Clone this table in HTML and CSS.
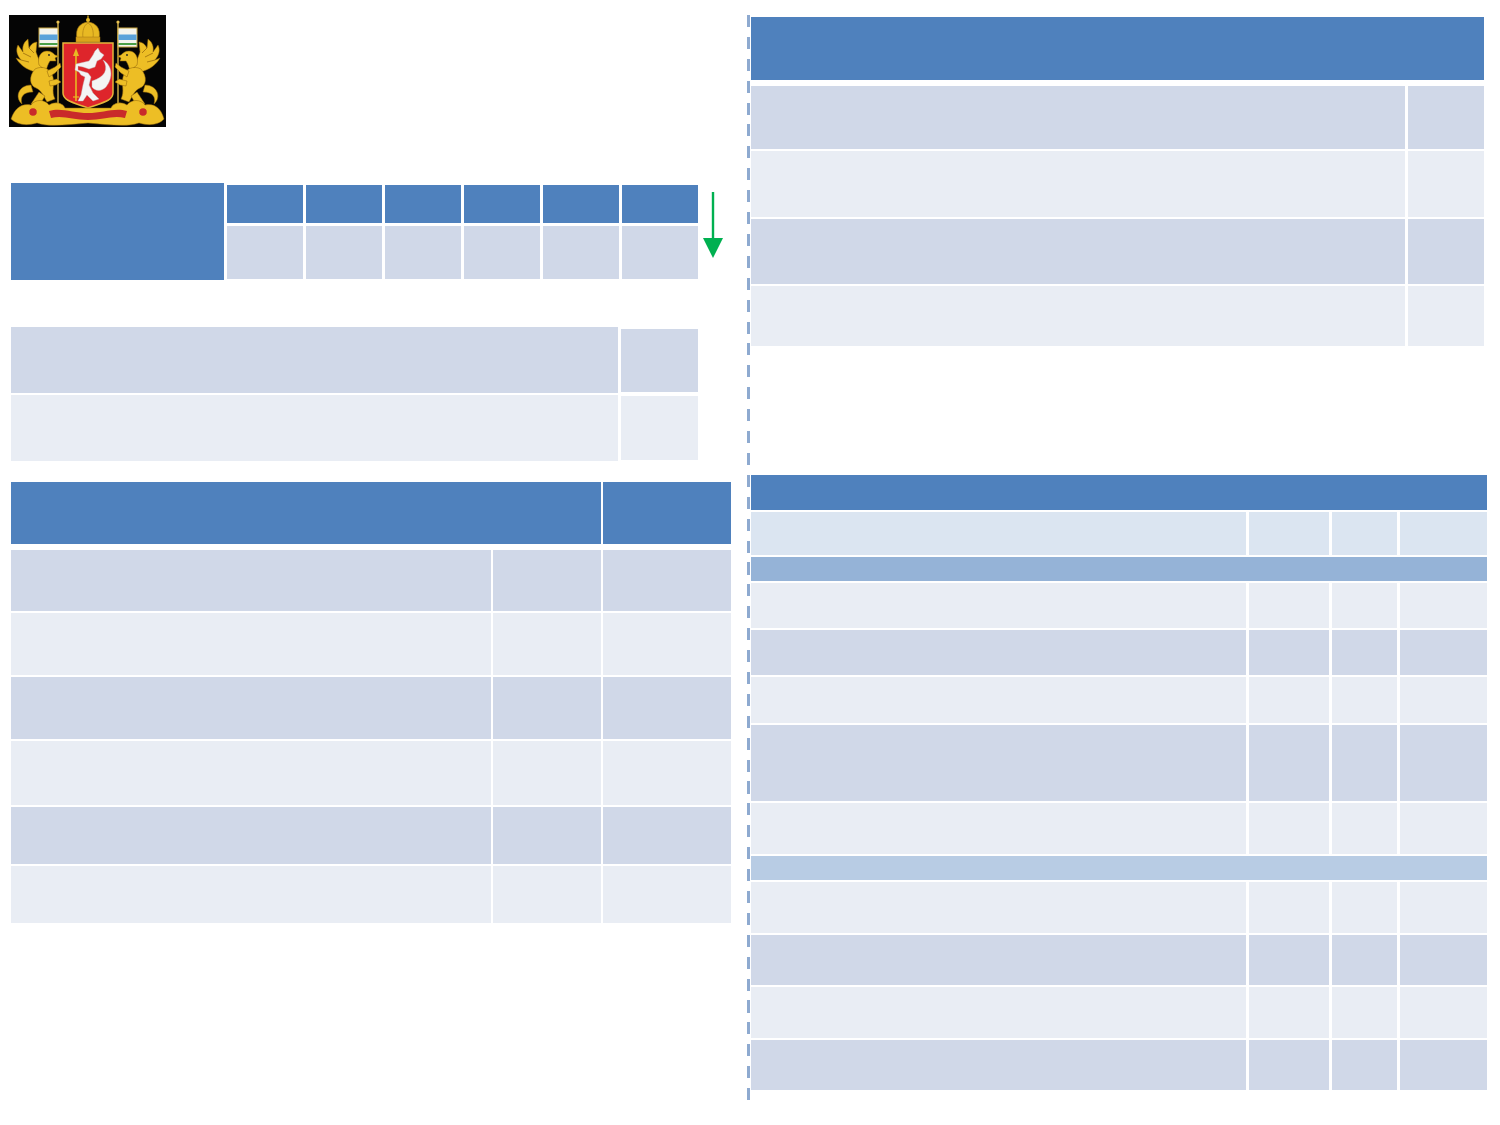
FILE: index.html
```html
<!DOCTYPE html>
<html lang="ru">
<head>
<meta charset="utf-8">
<title>Отчёт</title>
<link rel="stylesheet" href="styles.css">
</head>
<body>
<div class="page">
  <div class="left">
    <div class="logo">
      <svg viewBox="0 0 157 112" width="157" height="112" xmlns="http://www.w3.org/2000/svg">
        <defs>
          <g id="griffin" fill="#EDBE25" stroke="#8F620A" stroke-width="0.5">
            <path d="M30 58 C21 56 12 52 7 43 L12 45 C7 39 7 34 9 30 L14 37 C13 31 15 27 19 24 L20 33 C22 29 25 27 28 27 L27 37 C29 42 31 48 33 52 Z"/>
            <path d="M12 45 L20 47 M14 38 L22 42 M20 33 L25 38" fill="none" stroke="#8F620A" stroke-width="0.7"/>
            <path d="M30 50 C28 42 32 36 38 36 C42 36 44 38 46 40 L50 41 L46 43 L47 46 L41 46 C39 49 38 52 37 56 Z"/>
            <circle cx="40" cy="40" r="0.9" fill="#222" stroke="none"/>
            <path d="M26 54 C34 50 42 54 44 62 C46 70 42 76 46 84 L38 87 C34 80 32 75 27 73 C21 71 19 62 26 54 Z"/>
            <path d="M38 56 L46 52 L51 48 L52 52 L46 58 L40 62 Z"/>
            <path d="M40 66 L48 64 L52 67 L47 70 L41 71 Z"/>
            <path d="M30 77 L22 89 L30 91 L36 81 Z"/>
            <path d="M22 70 C10 70 5 82 13 89 C11 82 14 77 24 77 Z"/>
          </g>
          <g id="flag">
            <line x1="49" y1="8" x2="49" y2="88" stroke="#D9B54A" stroke-width="1.4"/>
            <circle cx="49" cy="7" r="1.6" fill="#E6C050"/>
            <rect x="30" y="13" width="19" height="19" fill="#F4F4EE" stroke="#C9A640" stroke-width="1"/>
            <rect x="30.5" y="19.5" width="18" height="5.5" fill="#5AA2DA"/>
            <rect x="30.5" y="28" width="18" height="2" fill="#4AA048"/>
          </g>
        </defs>
        <rect x="0" y="0" width="157" height="112" fill="#050505"/>
        <use href="#flag"/>
        <use href="#flag" transform="translate(158,0) scale(-1,1)"/>
        <use href="#griffin"/>
        <use href="#griffin" transform="translate(158,0) scale(-1,1)"/>
        <!-- crown -->
        <path d="M68 24 C66 13 71 8 79 7 C87 8 92 13 90 24 Z" fill="#E8B923" stroke="#A67710" stroke-width="0.6"/>
        <path d="M74 23 C73 16 75 10 79 8 C83 10 85 16 84 23" fill="none" stroke="#A67710" stroke-width="0.6"/>
        <rect x="67" y="22" width="24" height="5" fill="#D9A51C" stroke="#A67710" stroke-width="0.5"/>
        <circle cx="79" cy="5" r="2" fill="#E8B923"/>
        <line x1="79" y1="0.5" x2="79" y2="4" stroke="#E8B923" stroke-width="1.2"/>
        <!-- shield -->
        <path d="M54 28 H104 V78 C104 86 92 88 79 93 C66 88 54 86 54 78 Z" fill="#DE252B" stroke="#E3B53B" stroke-width="1.5"/>
        <!-- arrow -->
        <line x1="67" y1="38" x2="67" y2="86" stroke="#E8B923" stroke-width="1.6"/>
        <path d="M64 41 L67 33 L70 41 Z" fill="#E8B923"/>
        <line x1="64" y1="82" x2="70" y2="82" stroke="#E8B923" stroke-width="1.2"/>
        <!-- sable -->
        <path d="M86 36 L89 33 L91 37 L95 40 L92 44 L88 46 L86 52 L80 54 L74 52 L69 51 L69 55 L79 58 L82 62 L80 70 L84 78 L90 84 L84 86 L78 80 L74 86 L69 86 L72 80 L74 70 L76 62 L72 60 L70 57 L66 55 L67 49 L80 46 L84 40 Z" fill="#F4F4F4" stroke="#BDBDBD" stroke-width="0.4"/>
        <path d="M83 66 C96 62 100 54 94 45 C103 50 105 62 97 72 C92 77 86 76 83 72 Z" fill="#F4F4F4" stroke="#BDBDBD" stroke-width="0.4"/>
        <!-- base -->
        <path d="M2 104 C6 92 14 88 22 90 C26 84 36 84 40 90 C46 86 54 88 56 93 L102 93 C104 88 112 86 118 90 C122 84 132 84 136 90 C144 88 152 92 155 104 C150 110 140 111 130 108 C120 112 100 110 79 108 C58 110 38 112 28 108 C18 111 8 110 2 104 Z" fill="#EDBE25" stroke="#8F620A" stroke-width="0.5"/>
        <path d="M40 96 C52 92 64 98 79 98 C94 98 106 92 118 96 L116 103 C104 100 94 105 79 105 C64 105 54 100 42 103 Z" fill="#C92A2A"/>
        <circle cx="24" cy="97" r="4.5" fill="#C92A2A" stroke="#EDBE25" stroke-width="1.5"/>
        <circle cx="134" cy="97" r="4.5" fill="#C92A2A" stroke="#EDBE25" stroke-width="1.5"/>
      </svg>
    </div>

    <div class="t1">
      <div class="cell blue t1-head"></div>
      <div class="t1-grid">
        <div class="cell blue"></div><div class="cell blue"></div><div class="cell blue"></div>
        <div class="cell blue"></div><div class="cell blue"></div><div class="cell blue"></div>
        <div class="cell dark"></div><div class="cell dark"></div><div class="cell dark"></div>
        <div class="cell dark"></div><div class="cell dark"></div><div class="cell dark"></div>
      </div>
      <svg class="arrow" viewBox="0 0 20 66" width="20" height="66" xmlns="http://www.w3.org/2000/svg">
        <rect x="8.8" y="0" width="2.4" height="47" fill="#00B050"/>
        <path d="M0 46 L20 46 L10 66 Z" fill="#00B050"/>
      </svg>
    </div>

    <div class="t2">
      <div class="cell dark"></div><div class="cell dark t2-r1"></div>
      <div class="cell light"></div><div class="cell light t2-r2"></div>
    </div>

    <div class="t3">
      <div class="t3-head">
        <div class="cell blue"></div><div class="cell blue"></div>
      </div>
      <div class="t3-body">
        <div class="cell dark"></div><div class="cell dark"></div><div class="cell dark"></div>
        <div class="cell light"></div><div class="cell light"></div><div class="cell light"></div>
        <div class="cell dark"></div><div class="cell dark"></div><div class="cell dark"></div>
        <div class="cell light"></div><div class="cell light"></div><div class="cell light"></div>
        <div class="cell dark"></div><div class="cell dark"></div><div class="cell dark"></div>
        <div class="cell light"></div><div class="cell light"></div><div class="cell light"></div>
      </div>
    </div>
  </div>

  <div class="divider"></div>

  <div class="right">
    <div class="t4">
      <div class="cell blue t4-head"></div>
      <div class="t4-body">
        <div class="cell dark"></div><div class="cell dark"></div>
        <div class="cell light"></div><div class="cell light"></div>
        <div class="cell dark"></div><div class="cell dark"></div>
        <div class="cell light"></div><div class="cell light"></div>
      </div>
    </div>

    <div class="t5">
      <div class="cell blue full h35"></div>
      <div class="row h43"><div class="cell pale"></div><div class="cell pale"></div><div class="cell pale"></div><div class="cell pale"></div></div>
      <div class="cell sec1 full h24"></div>
      <div class="row h45"><div class="cell light"></div><div class="cell light"></div><div class="cell light"></div><div class="cell light"></div></div>
      <div class="row h45"><div class="cell dark"></div><div class="cell dark"></div><div class="cell dark"></div><div class="cell dark"></div></div>
      <div class="row h46"><div class="cell light"></div><div class="cell light"></div><div class="cell light"></div><div class="cell light"></div></div>
      <div class="row h76"><div class="cell dark"></div><div class="cell dark"></div><div class="cell dark"></div><div class="cell dark"></div></div>
      <div class="row h51"><div class="cell light"></div><div class="cell light"></div><div class="cell light"></div><div class="cell light"></div></div>
      <div class="cell sec2 full h24"></div>
      <div class="row h51"><div class="cell light"></div><div class="cell light"></div><div class="cell light"></div><div class="cell light"></div></div>
      <div class="row h50"><div class="cell dark"></div><div class="cell dark"></div><div class="cell dark"></div><div class="cell dark"></div></div>
      <div class="row h51"><div class="cell light"></div><div class="cell light"></div><div class="cell light"></div><div class="cell light"></div></div>
      <div class="row h50"><div class="cell dark"></div><div class="cell dark"></div><div class="cell dark"></div><div class="cell dark"></div></div>
    </div>
  </div>
</div>
</body>
</html>
```

FILE: styles.css
```css
html, body {
  margin: 0;
  padding: 0;
  background: #ffffff;
  font-family: "Liberation Sans", Arial, sans-serif;
}

.page {
  display: flex;
  align-items: flex-start;
  width: 1500px;
}

.cell { box-sizing: border-box; }
.blue { background: #4F81BD; }
.dark { background: #D0D8E8; }
.light { background: #E9EDF4; }
.pale { background: #DBE5F1; }
.sec1 { background: #95B3D7; }
.sec2 { background: #B8CCE4; }

/* ---------- left column ---------- */
.left {
  width: 722px;
  margin-left: 9px;
  padding-top: 15px;
  display: flex;
  flex-direction: column;
}

.logo {
  width: 157px;
  height: 112px;
}
.logo svg { display: block; }

.t1 {
  margin-top: 56px;
  margin-left: 2px;
  display: flex;
  align-items: flex-start;
}
.t1-head {
  width: 213px;
  height: 97px;
}
.t1-grid {
  margin-left: 3px;
  margin-top: 2px;
  display: grid;
  grid-template-columns: repeat(6, 76px);
  grid-template-rows: 38px 53px;
  gap: 3px;
}
.arrow {
  display: block;
  margin-left: 5px;
  margin-top: 9px;
}

.t2 {
  margin-top: 47px;
  margin-left: 2px;
  display: grid;
  grid-template-columns: 607px 77px;
  grid-template-rows: 66px 66px;
  column-gap: 3px;
  row-gap: 2px;
  width: 687px;
}
.t2-r1 { margin: 2px 0 1px; }
.t2-r2 { margin: 1px 0 1px; }

.t3 {
  margin-top: 21px;
  margin-left: 2px;
  width: 720px;
}
.t3-head {
  display: grid;
  grid-template-columns: 590px 128px;
  column-gap: 2px;
  height: 62px;
}
.t3-body {
  margin-top: 6px;
  display: grid;
  grid-template-columns: 480px 108px 128px;
  grid-template-rows: 61px 62px 62px 64px 57px 57px;
  gap: 2px;
}

/* ---------- divider ---------- */
.divider {
  width: 3px;
  height: 1085px;
  margin-top: 15px;
  margin-left: 16px;
  background: repeating-linear-gradient(to bottom, #8EAAD0 0, #8EAAD0 12px, transparent 12px, transparent 21.9px);
}

/* ---------- right column ---------- */
.right {
  width: 736px;
  margin-left: 1px;
  padding-top: 17px;
  display: flex;
  flex-direction: column;
}

.t4 { width: 733px; }
.t4-head { height: 63px; }
.t4-body {
  margin-top: 6px;
  display: grid;
  grid-template-columns: 654px 76px;
  grid-template-rows: 63px 66px 65px 60px;
  column-gap: 3px;
  row-gap: 2px;
}

.t5 {
  margin-top: 129px;
  width: 736px;
  display: flex;
  flex-direction: column;
  gap: 2px;
}
.t5 .row {
  display: grid;
  grid-template-columns: 495px 80px 65px 87px;
  column-gap: 3px;
}
.full { width: 100%; }

.h24 { height: 24px; }
.h35 { height: 35px; }
.h43 { height: 43px; }
.h45 { height: 45px; }
.h46 { height: 46px; }
.h50 { height: 50px; }
.h51 { height: 51px; }
.h76 { height: 76px; }
```
